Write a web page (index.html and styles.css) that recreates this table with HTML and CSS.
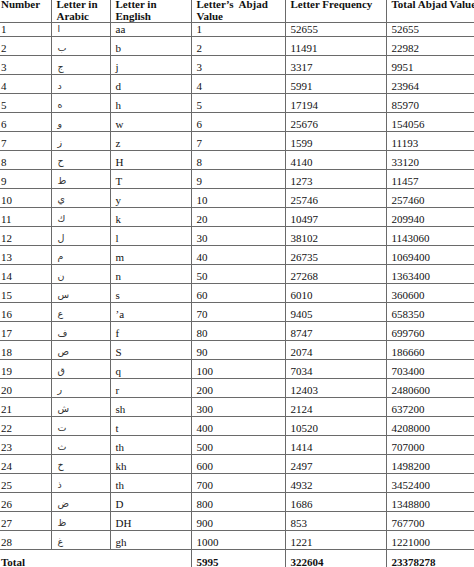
FILE: index.html
```html
<!DOCTYPE html>
<html>
<head>
<meta charset="utf-8">
<link rel="stylesheet" href="styles.css">
</head>
<body>
<table class="abjad">
<colgroup>
<col class="c1"><col class="c2"><col class="c3"><col class="c4"><col class="c5"><col class="c6">
</colgroup>
<thead>
<tr class="head">
<th>Number</th><th>Letter in Arabic</th><th>Letter in English</th><th>Letter’s&nbsp; Abjad Value</th><th>Letter Frequency</th><th class="nowrap">Total Abjad Value</th>
</tr>
</thead>
<tbody>
<tr class="first"><td>1</td><td class="ar">ا</td><td>aa</td><td>1</td><td>52655</td><td>52655</td></tr>
<tr><td>2</td><td class="ar">ب</td><td>b</td><td>2</td><td>11491</td><td>22982</td></tr>
<tr><td>3</td><td class="ar">ج</td><td>j</td><td>3</td><td>3317</td><td>9951</td></tr>
<tr><td>4</td><td class="ar">د</td><td>d</td><td>4</td><td>5991</td><td>23964</td></tr>
<tr><td>5</td><td class="ar">ه</td><td>h</td><td>5</td><td>17194</td><td>85970</td></tr>
<tr><td>6</td><td class="ar">و</td><td>w</td><td>6</td><td>25676</td><td>154056</td></tr>
<tr><td>7</td><td class="ar">ز</td><td>z</td><td>7</td><td>1599</td><td>11193</td></tr>
<tr><td>8</td><td class="ar">ح</td><td>H</td><td>8</td><td>4140</td><td>33120</td></tr>
<tr><td>9</td><td class="ar">ط</td><td>T</td><td>9</td><td>1273</td><td>11457</td></tr>
<tr><td>10</td><td class="ar">ي</td><td>y</td><td>10</td><td>25746</td><td>257460</td></tr>
<tr><td>11</td><td class="ar">ك</td><td>k</td><td>20</td><td>10497</td><td>209940</td></tr>
<tr><td>12</td><td class="ar">ل</td><td>l</td><td>30</td><td>38102</td><td>1143060</td></tr>
<tr><td>13</td><td class="ar">م</td><td>m</td><td>40</td><td>26735</td><td>1069400</td></tr>
<tr><td>14</td><td class="ar">ن</td><td>n</td><td>50</td><td>27268</td><td>1363400</td></tr>
<tr><td>15</td><td class="ar">س</td><td>s</td><td>60</td><td>6010</td><td>360600</td></tr>
<tr><td>16</td><td class="ar">ع</td><td>’a</td><td>70</td><td>9405</td><td>658350</td></tr>
<tr><td>17</td><td class="ar">ف</td><td>f</td><td>80</td><td>8747</td><td>699760</td></tr>
<tr><td>18</td><td class="ar">ص</td><td>S</td><td>90</td><td>2074</td><td>186660</td></tr>
<tr><td>19</td><td class="ar">ق</td><td>q</td><td>100</td><td>7034</td><td>703400</td></tr>
<tr><td>20</td><td class="ar">ر</td><td>r</td><td>200</td><td>12403</td><td>2480600</td></tr>
<tr><td>21</td><td class="ar">ش</td><td>sh</td><td>300</td><td>2124</td><td>637200</td></tr>
<tr><td>22</td><td class="ar">ت</td><td>t</td><td>400</td><td>10520</td><td>4208000</td></tr>
<tr><td>23</td><td class="ar">ث</td><td>th</td><td>500</td><td>1414</td><td>707000</td></tr>
<tr><td>24</td><td class="ar">خ</td><td>kh</td><td>600</td><td>2497</td><td>1498200</td></tr>
<tr><td>25</td><td class="ar">ذ</td><td>th</td><td>700</td><td>4932</td><td>3452400</td></tr>
<tr><td>26</td><td class="ar">ض</td><td>D</td><td>800</td><td>1686</td><td>1348800</td></tr>
<tr><td>27</td><td class="ar">ظ</td><td>DH</td><td>900</td><td>853</td><td>767700</td></tr>
<tr><td>28</td><td class="ar">غ</td><td>gh</td><td>1000</td><td>1221</td><td>1221000</td></tr>
<tr class="total"><td colspan="3">Total</td><td>5995</td><td>322604</td><td>23378278</td></tr>
</tbody>
</table>
</body>
</html>
```

FILE: styles.css
```css
html, body {
  margin: 0;
  padding: 0;
  background: #fff;
  overflow: hidden;
}

.abjad {
  border-collapse: collapse;
  table-layout: fixed;
  width: 494px;
  margin: -1px 0 0 -4px;
  font-family: "Liberation Serif", "Times New Roman", serif;
  font-size: 11px;
  color: #111;
}

.c1 { width: 55px; }
.c2 { width: 59px; }
.c3 { width: 81px; }
.c4 { width: 94px; }
.c5 { width: 101px; }
.c6 { width: 104px; }

.abjad th,
.abjad td {
  border: 1px solid #6a6a6a;
  padding: 0 2px 1px 5px;
  text-align: left;
  vertical-align: bottom;
  line-height: 12px;
  white-space: nowrap;
  overflow: hidden;
}

.abjad th {
  border-top: none;
  font-weight: bold;
  vertical-align: top;
  white-space: normal;
  line-height: 11.5px;
  padding-top: 0;
  padding-bottom: 0;
  height: 22px;
}

.abjad th.nowrap {
  white-space: nowrap;
}

.abjad tr > :first-child {
  border-left: none;
}

.abjad tbody tr {
  height: 19px;
}

.abjad tbody tr.first {
  height: 13px;
}

.abjad td.ar {
  font-family: "DejaVu Sans", sans-serif;
  font-size: 9.5px;
  color: #333;
  padding-left: 6px;
}

.abjad tr.total td {
  font-weight: bold;
  border-bottom: none;
}
```
